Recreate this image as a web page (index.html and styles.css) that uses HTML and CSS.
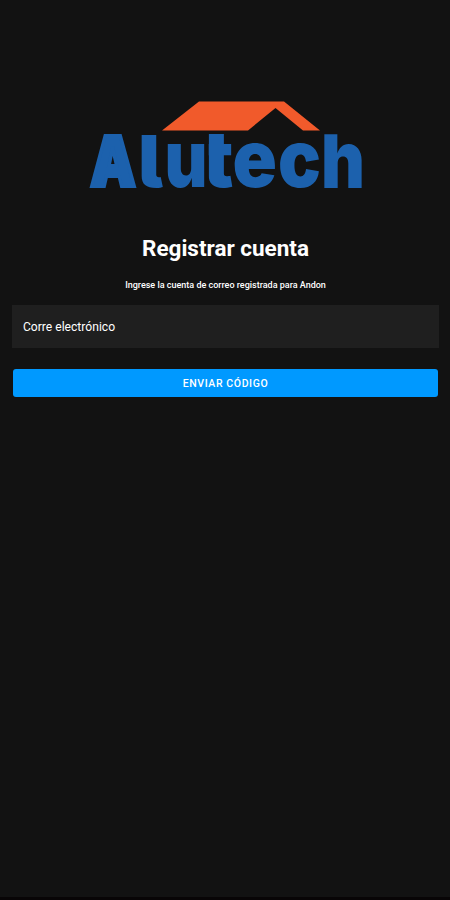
FILE: index.html
```html
<!DOCTYPE html>
<html lang="es">
<head>
<meta charset="utf-8">
<title>Registrar cuenta</title>
<link rel="stylesheet" href="styles.css">
</head>
<body>
<main class="page">
  <svg class="logo" width="276" height="92" viewBox="88 98 276 92" role="img" aria-label="Alutech">
    <clipPath id="ascender"><rect x="320" y="134.300" width="46" height="56"/></clipPath>
    <clipPath id="crossbar"><rect x="208.700" y="134" width="30" height="54"/></clipPath>
    <path class="roof" d="M199 101.500H284L320 130.500H303L275.500 108L248 130.500H162Z"/>
    <g class="wordmark">
      <text class="capital" x="90.500" y="185.800" textLength="45" lengthAdjust="spacingAndGlyphs">A</text>
      <text class="ell" x="138" y="187.500" textLength="25" lengthAdjust="spacingAndGlyphs">l</text>
      <text x="164.500" y="187" textLength="43" lengthAdjust="spacingAndGlyphs">u</text>
      <text x="202.500" y="187" textLength="31" lengthAdjust="spacingAndGlyphs" clip-path="url(#crossbar)">t</text>
      <text x="232.500" y="187" textLength="44.500" lengthAdjust="spacingAndGlyphs">e</text>
      <text x="278" y="187" textLength="43" lengthAdjust="spacingAndGlyphs">c</text>
      <text x="321" y="187.500" textLength="44" lengthAdjust="spacingAndGlyphs" clip-path="url(#ascender)">h</text>
    </g>
  </svg>
  <h1 class="title">Registrar cuenta</h1>
  <p class="hint">Ingrese la cuenta de correo registrada para Andon</p>
  <form class="form">
    <div class="field">Corre electrónico</div>
    <button class="submit" type="button">ENVIAR CÓDIGO</button>
  </form>
</main>
</body>
</html>
```
FILE: styles.css
```css
* { box-sizing: border-box; }
body { margin: 0; background: #121212; color: #fff; font-family: Roboto, sans-serif; }
.page {
  height: 900px;
  padding: 98px 11px 0 12px;
  display: flex;
  flex-direction: column;
  align-items: center;
  border-bottom: 3px solid #080506;
}
.logo { display: block; flex: none; overflow: visible; }
.roof { fill: #f15a2b; }
.wordmark {
  fill: #1c61ad;
  font-family: Inter, sans-serif;
  font-weight: 900;
  font-size: 79px;
  font-feature-settings: "cv05";
}
.capital { font-size: 68.500px; stroke: #1c61ad; stroke-width: 4px; }
.ell { font-size: 73.500px; }
.title { margin: 43px 0 0; font-size: 22.500px; line-height: 30px; font-weight: 700; white-space: nowrap; }
.hint { margin: 15px 0 0; font-size: 9px; line-height: 14px; font-weight: 500; white-space: nowrap; }
.form { width: 100%; margin-top: 13px; }
.field {
  height: 43px;
  padding-left: 11px;
  display: flex;
  align-items: center;
  background: #1f1f1f;
  font-size: 12.100px;
}
.submit {
  display: block;
  width: calc(100% - 2px);
  height: 28px;
  margin: 21px 1px 0;
  padding: 1px 0 0;
  border: 0;
  border-radius: 3px;
  background: #0099ff;
  color: #fff;
  font: 500 10.500px/27px Roboto, sans-serif;
  letter-spacing: .6px;
}
```
